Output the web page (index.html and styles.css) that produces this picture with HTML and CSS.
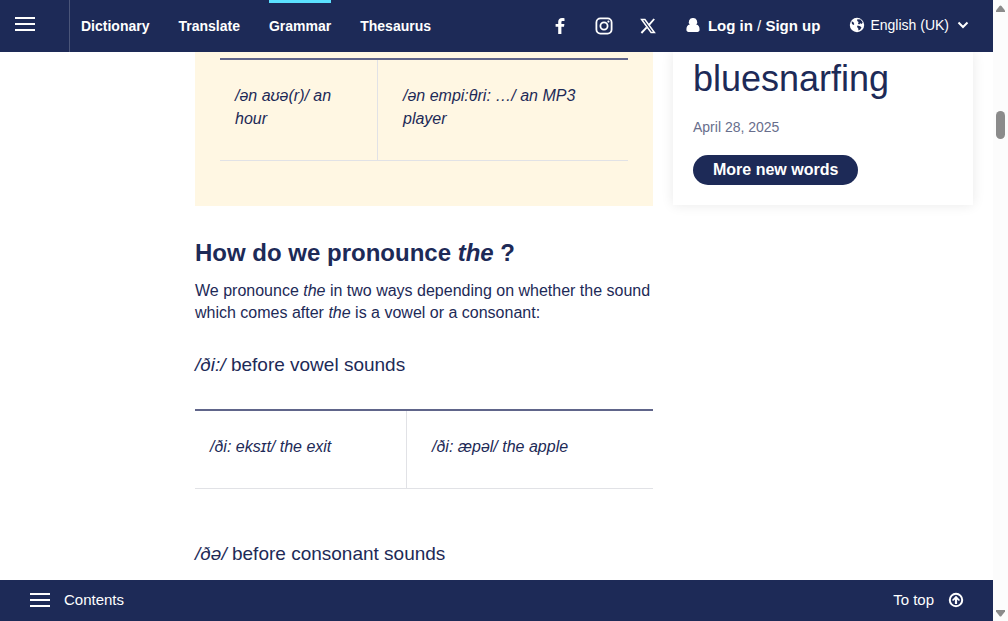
FILE: index.html
```html
<!DOCTYPE html>
<html lang="en-GB">
<head>
<meta charset="utf-8">
<meta name="viewport" content="width=device-width, initial-scale=1">
<title>A, an and the – Grammar</title>
<link rel="stylesheet" href="styles.css">
</head>
<body>
<div class="page">
  <header class="topbar">
    <button class="menu-button" aria-label="Open menu"><span class="bars"></span></button>
    <nav class="main-nav" aria-label="Main">
      <a href="#">Dictionary</a>
      <a href="#">Translate</a>
      <a href="#" class="active" aria-current="page">Grammar</a>
      <a href="#">Thesaurus</a>
    </nav>
    <div class="social">
      <a href="#" aria-label="Facebook"><svg width="18" height="18" viewBox="0 0 18 18"><path fill="currentColor" d="M13.500 1.200v2.700h-1.700c-1.100 0-1.400.5-1.400 1.300v1.700h3l-.4 2.900h-2.600V17H7.200V9.800H4.600V6.900h2.600V4.800C7.200 2.400 8.700 1 11 1c1.100 0 2.100.1 2.500.2z"/></svg></a>
      <a href="#" aria-label="Instagram"><svg width="18" height="18" viewBox="0 0 18 18" fill="none" stroke="currentColor" stroke-width="1.8"><rect x="1.400" y="1.400" width="15.200" height="15.200" rx="4"/><circle cx="9" cy="9" r="3.600"/><circle cx="13.400" cy="4.600" r="1.100" fill="currentColor" stroke="none"/></svg></a>
      <a href="#" aria-label="X"><svg width="18" height="18" viewBox="0 0 18 18"><path fill="none" stroke="currentColor" stroke-width="1.500" d="M2.600 2.500h3.300l9.500 13h-3.300z"/><path fill="none" stroke="currentColor" stroke-width="1.900" d="M15.200 2 9.800 8.200M7.700 10.300 2.400 16"/></svg></a>
    </div>
    <div class="account">
      <svg width="14" height="16" viewBox="0 0 14 16"><path fill="currentColor" d="M7 1a3.900 3.900 0 0 1 3.200 6.500C12.700 7.900 13.600 10 13.600 12.800c0 1.300-.9 2.200-2.100 2.200h-9C1.300 15 .4 14.100.4 12.800.4 10 1.300 7.900 3.800 7.500A3.900 3.900 0 0 1 7 1z"/></svg>
      <span><a href="#">Log in</a> / <a href="#">Sign up</a></span>
    </div>
    <button class="language">
      <svg width="16" height="16" viewBox="0 0 16 16"><circle cx="8" cy="8" r="7.200" fill="currentColor"/><path fill="#1d2a57" d="M8.300 2.300 11.500 2.500 13.700 5.200 12.800 6.900 11.300 6.300 10.200 7.600 9 6.700 9.600 5 8.200 3.900zM2.600 4.300 4.500 5.300 5.300 7.200 4.300 7.900 2.900 6.800zM8.600 8.600l2.600.6 1.300 1.200-1.300 2.100-1.700.9-.3-2.200-1.200-1.300z"/></svg>
      <span>English (UK)</span>
      <svg width="12" height="8" viewBox="0 0 12 8"><path fill="none" stroke="currentColor" stroke-width="2" d="m1.500 1.500 4.500 4.500 4.500-4.500"/></svg>
    </button>
  </header>

  <main class="content">
    <article class="article">
      <div class="panel">
        <table class="examples narrow">
          <tr>
            <td>/ən aʊə(r)/ an hour</td>
            <td>/ən empi:θri: …/ an MP3 player</td>
          </tr>
        </table>
      </div>
      <h2>How do we pronounce <em>the</em> ?</h2>
      <p>We pronounce <em>the</em> in two ways depending on whether the sound which comes after <em>the</em> is a vowel or a consonant:</p>
      <h3><em>/ði:/</em> before vowel sounds</h3>
      <table class="examples wide">
        <tr>
          <td>/ði: eksɪt/ the exit</td>
          <td>/ði: æpəl/ the apple</td>
        </tr>
      </table>
      <h3><em>/ðə/</em> before consonant sounds</h3>
    </article>
    <aside class="new-words">
      <div class="word">bluesnarfing</div>
      <div class="date">April 28, 2025</div>
      <a href="#" class="pill">More new words</a>
    </aside>
  </main>

  <footer class="bottombar">
    <button class="contents"><span class="bars"></span>Contents</button>
    <a href="#" class="to-top">To top
      <svg width="16" height="16" viewBox="0 0 16 16"><circle cx="8" cy="8" r="6.200" fill="none" stroke="currentColor" stroke-width="2"/><path fill="currentColor" d="m8 3.700 4 4.200-1.100 1.100L9.100 7.600V12H6.900V7.600L5.100 9 4 7.900z"/></svg>
    </a>
  </footer>
</div>
<div class="scrollbar" aria-hidden="true">
  <svg class="arrow" width="9" height="8" viewBox="0 0 9 8"><path d="M3.500 1Q4.500 0 5.500 1L9 5.500V7H0V5.500z"/></svg>
  <div class="track"><div class="thumb"></div></div>
  <svg class="arrow" width="9" height="8" viewBox="0 0 9 8"><path d="M3.500 7Q4.500 8 5.500 7L9 2.500V1H0v1.500z"/></svg>
</div>
</body>
</html>
```

FILE: styles.css
```css
:root {
  --navy: #1d2a57;
  --line: #e1e2e6;
  --rule: #60658a;
}

* { box-sizing: border-box; }

body {
  margin: 0;
  display: grid;
  grid-template-columns: 1fr 15px;
  height: 100vh;
  overflow: hidden;
  font-family: "Liberation Sans", Arial, sans-serif;
  font-size: 16px;
  color: var(--navy);
  background: #fff;
}

a { color: inherit; text-decoration: none; }
svg { display: block; flex: none; }

button {
  font: inherit;
  color: inherit;
  background: none;
  border: 0;
  padding: 0;
  cursor: pointer;
}

.page {
  display: flex;
  flex-direction: column;
  min-width: 0;
  min-height: 0;
}

.topbar,
.bottombar {
  flex: none;
  display: flex;
  align-items: center;
  background: var(--navy);
  color: #fff;
  font-size: 15px;
}

.topbar {
  height: 52px;
  padding-right: 24px;
  white-space: nowrap;
}

.bars {
  display: block;
  width: 20px;
  height: 14px;
  border-top: 2px solid #fff;
  border-bottom: 2px solid #fff;
  background: linear-gradient(#fff, #fff) center / 100% 2px no-repeat;
}

.menu-button {
  height: 100%;
  width: 70px;
  padding: 0 15px 4px;
  border-right: 1px solid #4a5579;
}

.main-nav {
  display: flex;
  gap: 29px;
  height: 100%;
  margin-left: 11px;
  font-size: 14px;
  font-weight: bold;
}

.main-nav a {
  display: flex;
  align-items: center;
  border-top: 3px solid transparent;
  padding-bottom: 4px;
}

.main-nav .active { border-top-color: #5be1ff; }

.social {
  display: flex;
  gap: 26px;
  margin-left: auto;
}

.account {
  display: flex;
  align-items: center;
  gap: 8px;
  margin-left: 29px;
  padding-bottom: 2px;
}

.account a { font-weight: bold; }

.language {
  display: flex;
  align-items: center;
  gap: 5px;
  margin-left: 29px;
  padding-bottom: 2px;
  font-size: 14px;
}

.language svg:last-child { margin-left: 3px; }

.content {
  flex: 1;
  min-height: 0;
  overflow: hidden;
  display: flex;
  align-items: flex-start;
  gap: 20px;
  padding: 0 20px 0 195px;
}

.article { flex: 1; min-width: 0; }

.panel {
  background: #fff7e3;
  padding: 6px 25px 45px;
}

.examples {
  width: 100%;
  table-layout: fixed;
  border-collapse: separate;
  border-spacing: 0;
  border-top: 2px solid var(--rule);
  font-style: italic;
  line-height: 23px;
}

.examples td {
  vertical-align: top;
  padding: 24px 25px 30px;
  border-bottom: 1px solid var(--line);
}

.examples td:first-child {
  padding-left: 15px;
  border-right: 1px solid var(--line);
}

.narrow td:first-child { width: 158px; }
.wide td:first-child { width: 212px; }

h2 {
  margin: 32px 0 12px;
  font-size: 24px;
  line-height: 30px;
}

p { margin: 0; line-height: 22px; }

h3 {
  margin: 29px 0 32px;
  font-size: 19px;
  font-weight: normal;
  line-height: 24px;
}

.examples + h3 { margin-top: 53px; }

.new-words {
  width: 300px;
  padding: 4px 20px 20px;
  box-shadow: 0 0 12px rgba(0, 0, 0, 0.09);
}

.word { font-size: 36px; line-height: 46px; }

.date {
  margin: 16px 0 18px;
  font-size: 14px;
  line-height: 19px;
  color: #686e8c;
}

.pill {
  display: inline-block;
  padding: 0 20px;
  border-radius: 15px;
  background: var(--navy);
  color: #fff;
  font-weight: bold;
  line-height: 30px;
}

.bottombar {
  height: 41px;
  justify-content: space-between;
  padding: 0 29px 2px 30px;
}

.contents,
.to-top {
  display: flex;
  align-items: center;
  gap: 14px;
}

.scrollbar {
  display: flex;
  flex-direction: column;
  align-items: center;
  padding: 5px 0 4px;
  background: #fcfcfc;
}

.arrow { fill: #8b8b8b; }

.track { flex: 1; padding-top: 98px; }

.thumb {
  width: 9px;
  height: 28px;
  border-radius: 5px;
  background: #8b8b8b;
}
```
